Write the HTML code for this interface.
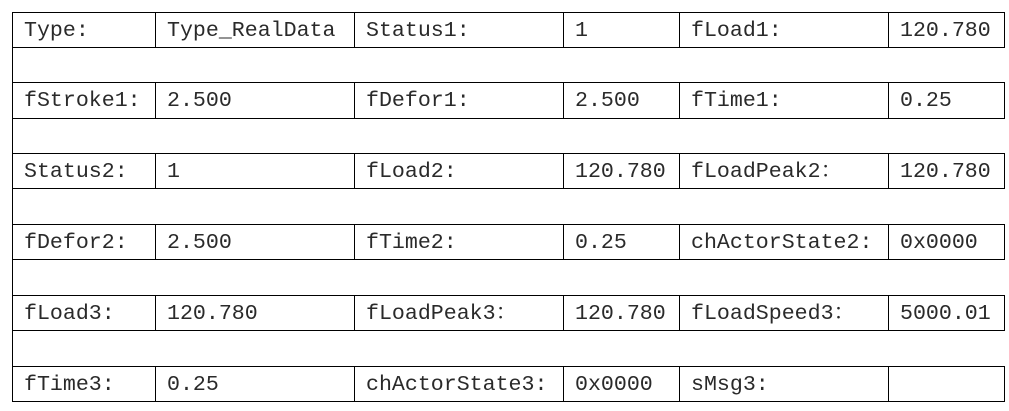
<html><head><style>
body{margin:0;width:1009px;height:411px;background:#fff;position:relative;overflow:hidden;font-family:"Liberation Mono","Noto Serif CJK SC",monospace;font-size:21.6px;color:#2a2a2a}
.h{position:absolute;left:12px;width:993px;height:1px;background:#000}
.v{position:absolute;width:1px;background:#000}
.t{position:absolute;line-height:36px;white-space:nowrap}
</style></head><body>
<div class="h" style="top:12px"></div><div class="h" style="top:47px"></div>
<div class="h" style="top:82px"></div><div class="h" style="top:118px"></div>
<div class="h" style="top:153px"></div><div class="h" style="top:188px"></div>
<div class="h" style="top:224px"></div><div class="h" style="top:259px"></div>
<div class="h" style="top:295px"></div><div class="h" style="top:330px"></div>
<div class="h" style="top:366px"></div><div class="h" style="top:401px"></div>
<div class="v" style="left:12px;top:12px;height:390px"></div>
<div id="vs"></div>
<script>
var rows=[12,82,153,224,295,366],xs=[155,354,563,679,888,1004];
var d=[["Type:","Type_RealData","Status1:","1","fLoad1:","120.780"],
["fStroke1:","2.500","fDefor1:","2.500","fTime1:","0.25"],
["Status2:","1","fLoad2:","120.780","fLoadPeak2：","120.780"],
["fDefor2:","2.500","fTime2:","0.25","chActorState2:","0x0000"],
["fLoad3:","120.780","fLoadPeak3：","120.780","fLoadSpeed3：","5000.01"],
["fTime3:","0.25","chActorState3:","0x0000","sMsg3:",""]];
var lx=[12,155,354,563,679,888],h="";
rows.forEach(function(y,r){xs.forEach(function(x){h+='<div class="v" style="left:'+x+'px;top:'+y+'px;height:36px"></div>'});
d[r].forEach(function(s,c){h+='<div class="t" style="left:'+(lx[c]+12)+'px;top:'+(y+1)+'px">'+s+'</div>'})});
document.getElementById('vs').innerHTML=h;
</script>
</body></html>
